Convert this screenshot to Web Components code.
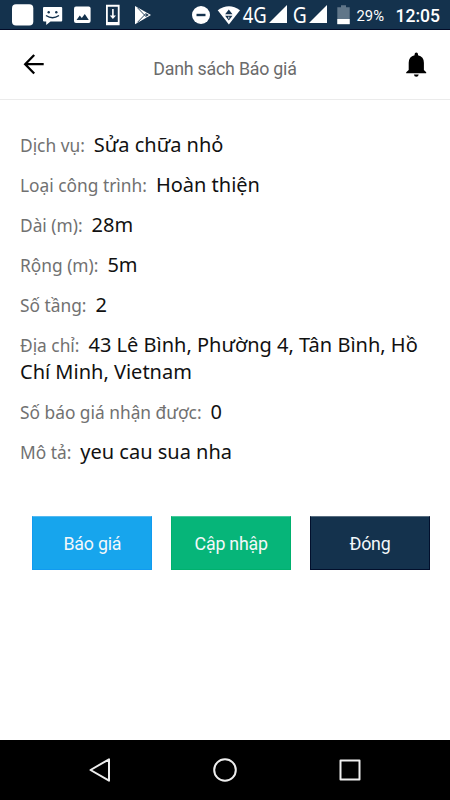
<!DOCTYPE html>
<html lang="vi">
<head>
<meta charset="utf-8">
<title>Danh sách Báo giá</title>
<style>
html,body{margin:0;padding:0;background:#fff}
</style>
</head>
<body>
<quote-screen></quote-screen>
<script>
const define = (name, html, after) => customElements.define(name, class extends HTMLElement {
  constructor() {
    super();
    this.attachShadow({mode: 'open'}).innerHTML = html;
    if (after) after(this);
  }
});

define('status-bar', `
<style>
:host{display:flex;justify-content:space-between;box-sizing:border-box;height:30px;background:#14324d;border-bottom:1px solid #030b27;color:#fff;font-family:Roboto,sans-serif}
.group{display:flex;height:29px}
svg{display:block;height:29px;fill:#fff;flex:none;overflow:visible}
.clock{padding-right:10px}
</style>
<div class="group">
 <svg width="38" viewBox="0 0 38 29"><rect x="12" y="4.2" width="21.3" height="21.3" rx="4"/></svg>
 <svg width="30" viewBox="38 0 30 29"><path d="M44 7h17.200q1 0 1 1v12.500q0 1-1 1H50.500L46.200 25v-3.500H44q-1 0-1-1V8q0-1 1-1z"/><circle cx="48.700" cy="12.300" r="1.200" fill="#14324d"/><circle cx="56.300" cy="12.300" r="1.200" fill="#14324d"/><path d="M46 15.500q6.500 4.500 13 0" fill="none" stroke="#14324d" stroke-width="1.400"/></svg>
 <svg width="30" viewBox="68 0 30 29"><rect x="74" y="6.500" width="16.600" height="16.600" rx="2"/><path d="M76.500 20l3.300-4.500 2 2.500 3-4 4 6z" fill="#14324d"/></svg>
 <svg width="30" viewBox="98 0 30 29"><path fill-rule="evenodd" d="M106 4.700h13.600v20.500H106zM107.800 6.700v15.300h10V6.700z"/><path d="M112.100 9h1.600v6.500h2.300l-3.100 3.600-3.100-3.600h2.300z"/></svg>
 <svg width="30" viewBox="128 0 30 29"><path d="M135 6l16 9-16 9.300z"/><path d="M136.300 8.800v12.700l6-6.400z" fill="#fff"/><path d="M137.500 7.800l9.300 9.600M137.500 22.300l9.300-9.700" fill="none" stroke="#14324d" stroke-width=".9"/><path d="M145.300 15l1.600-1.300 2 1.300-2 1.300z" fill="#14324d"/></svg>
</div>
<div class="group clock">
 <svg width="30" viewBox="185 0 30 29"><circle cx="201" cy="15" r="9"/><path d="M196.500 13.800h9v2.400h-9z" fill="#14324d"/></svg>
 <svg width="27" viewBox="215 0 27 29"><path d="M217.700 10.200Q229 2.500 240 10.200L228.900 24.500z"/><path d="M228.800 9.500l3.700 4.700h-7.400zM228.800 20.500l3.700-4.700h-7.400z" fill="#14324d" /><path d="M228.800 16.700v2" stroke="#fff"/></svg>
 <svg width="26" viewBox="242 0 26 29"><text x="242.700" y="23" font-family="Noto Sans" font-size="22" textLength="24" lengthAdjust="spacingAndGlyphs">4G</text></svg>
 <svg width="22" viewBox="268 0 22 29"><path d="M287 5v18h-18z"/></svg>
 <svg width="18" viewBox="290 0 18 29"><text x="292.700" y="23" font-family="Noto Sans" font-size="22" textLength="14" lengthAdjust="spacingAndGlyphs">G</text></svg>
 <svg width="22" viewBox="308 0 22 29"><path d="M327 5v18h-18z"/></svg>
 <svg width="25" viewBox="330 0 25 29"><path d="M337.300 7.200h3.700V5.300h5v1.900h3.700V24h-12.400z" fill="#607689"/><path d="M337.300 19h12.400v5.200h-12.400z"/></svg>
 <svg width="38" viewBox="355 0 38 29"><text x="356.500" y="20.800" font-size="14.700" textLength="27.500" lengthAdjust="spacingAndGlyphs">29%</text></svg>
 <svg width="47" viewBox="393 0 47 29"><text x="395.500" y="21.600" font-size="18" font-weight="500" textLength="44.500" lengthAdjust="spacingAndGlyphs">12:05</text></svg>
</div>`);

define('app-header', `
<style>
:host{display:grid;grid-template-columns:60px 1fr 60px;box-sizing:border-box;height:70px;border-bottom:1px solid #ebebeb;background:#fff}
svg{display:block}
h1{margin:0;padding-top:9px;text-align:center;font:400 17.800px/60px Roboto,sans-serif;letter-spacing:-.22px;color:#6b6b6b;white-space:nowrap}
</style>
<svg width="60" height="69" viewBox="0 30 60 69"><path d="M43.700 64.200H25.500M34.200 55l-9 9.200 9 9.300" fill="none" stroke="#000" stroke-width="2.300"/></svg>
<h1><slot></slot></h1>
<svg width="60" height="69" viewBox="390 30 60 69"><path d="M414.600 54.300q0-1.700 1.700-1.700t1.700 1.700v1q5.900 1.500 5.900 7.400v7.300l2.300 2.200v1h-20v-1l2.500-2.200v-7.300q0-5.900 5.900-7.400z"/><path d="M413.900 74.500h4.800q-.3 2.300-2.400 2.300t-2.400-2.300z"/></svg>`);

define('info-row', `
<style>
:host{display:block;font:400 20px/26.670px "Noto Sans",sans-serif;color:#111}
.label{font-size:17.330px;color:#717171;margin-right:9px}
</style><span class="label"></span><slot></slot>`,
el => { el.shadowRoot.querySelector('.label').textContent = el.getAttribute('label'); });

define('action-button', `
<style>
:host{display:block;flex:none;width:120px}
button{display:block;box-sizing:border-box;width:120px;height:54px;padding:2px 0 0;border:1px solid var(--edge);border-top-color:var(--top);background:var(--fill);color:#f3f8fa;font:400 17.800px/50px Roboto,sans-serif;letter-spacing:-.2px;text-align:center}
</style><button><slot></slot></button>`);

define('nav-bar', `
<style>
:host{display:flex;justify-content:center;gap:101px;align-items:center;height:60px;background:#000}
svg{display:block;fill:none;stroke:#eee;stroke-width:2;stroke-linejoin:round}
</style>
<svg width="24" height="26" viewBox="0 0 24 26"><path d="M2.500 13L21 2.300v21.400z"/></svg>
<svg width="24" height="26" viewBox="0 0 24 26"><circle cx="12" cy="13" r="10.800"/></svg>
<svg width="24" height="26" viewBox="0 0 24 26"><rect x="2.500" y="3.500" width="19" height="19"/></svg>`);

define('quote-screen', `
<style>
:host{display:flex;flex-direction:column;width:450px;height:800px;background:#fff;overflow:hidden}
main{flex:1;padding:31.900px 20px 0}
.rows{display:grid;gap:13.360px}
.actions{display:flex;gap:18.800px;padding:50.500px 0 0 12.400px}
.quote{--fill:#17a5ed;--edge:#119af0;--top:#55b9f0}
.update{--fill:#06b579;--edge:#00b06e;--top:#48c99c}
.close{--fill:#14324d;--edge:#020f2c;--top:#586d80}
</style>
<status-bar></status-bar>
<app-header>Danh sách Báo giá</app-header>
<main>
 <div class="rows">
  <info-row label="Dịch vụ:">Sửa chữa nhỏ</info-row>
  <info-row label="Loại công trình:">Hoàn thiện</info-row>
  <info-row label="Dài (m):">28m</info-row>
  <info-row label="Rộng (m):">5m</info-row>
  <info-row label="Số tầng:">2</info-row>
  <info-row label="Địa chỉ:">43 Lê Bình, Phường 4, Tân Bình, Hồ Chí Minh, Vietnam</info-row>
  <info-row label="Số báo giá nhận được:">0</info-row>
  <info-row label="Mô tả:">yeu cau sua nha</info-row>
 </div>
 <div class="actions">
  <action-button class="quote">Báo giá</action-button>
  <action-button class="update">Cập nhập</action-button>
  <action-button class="close">Đóng</action-button>
 </div>
</main>
<nav-bar></nav-bar>`);
</script>
</body>
</html>
